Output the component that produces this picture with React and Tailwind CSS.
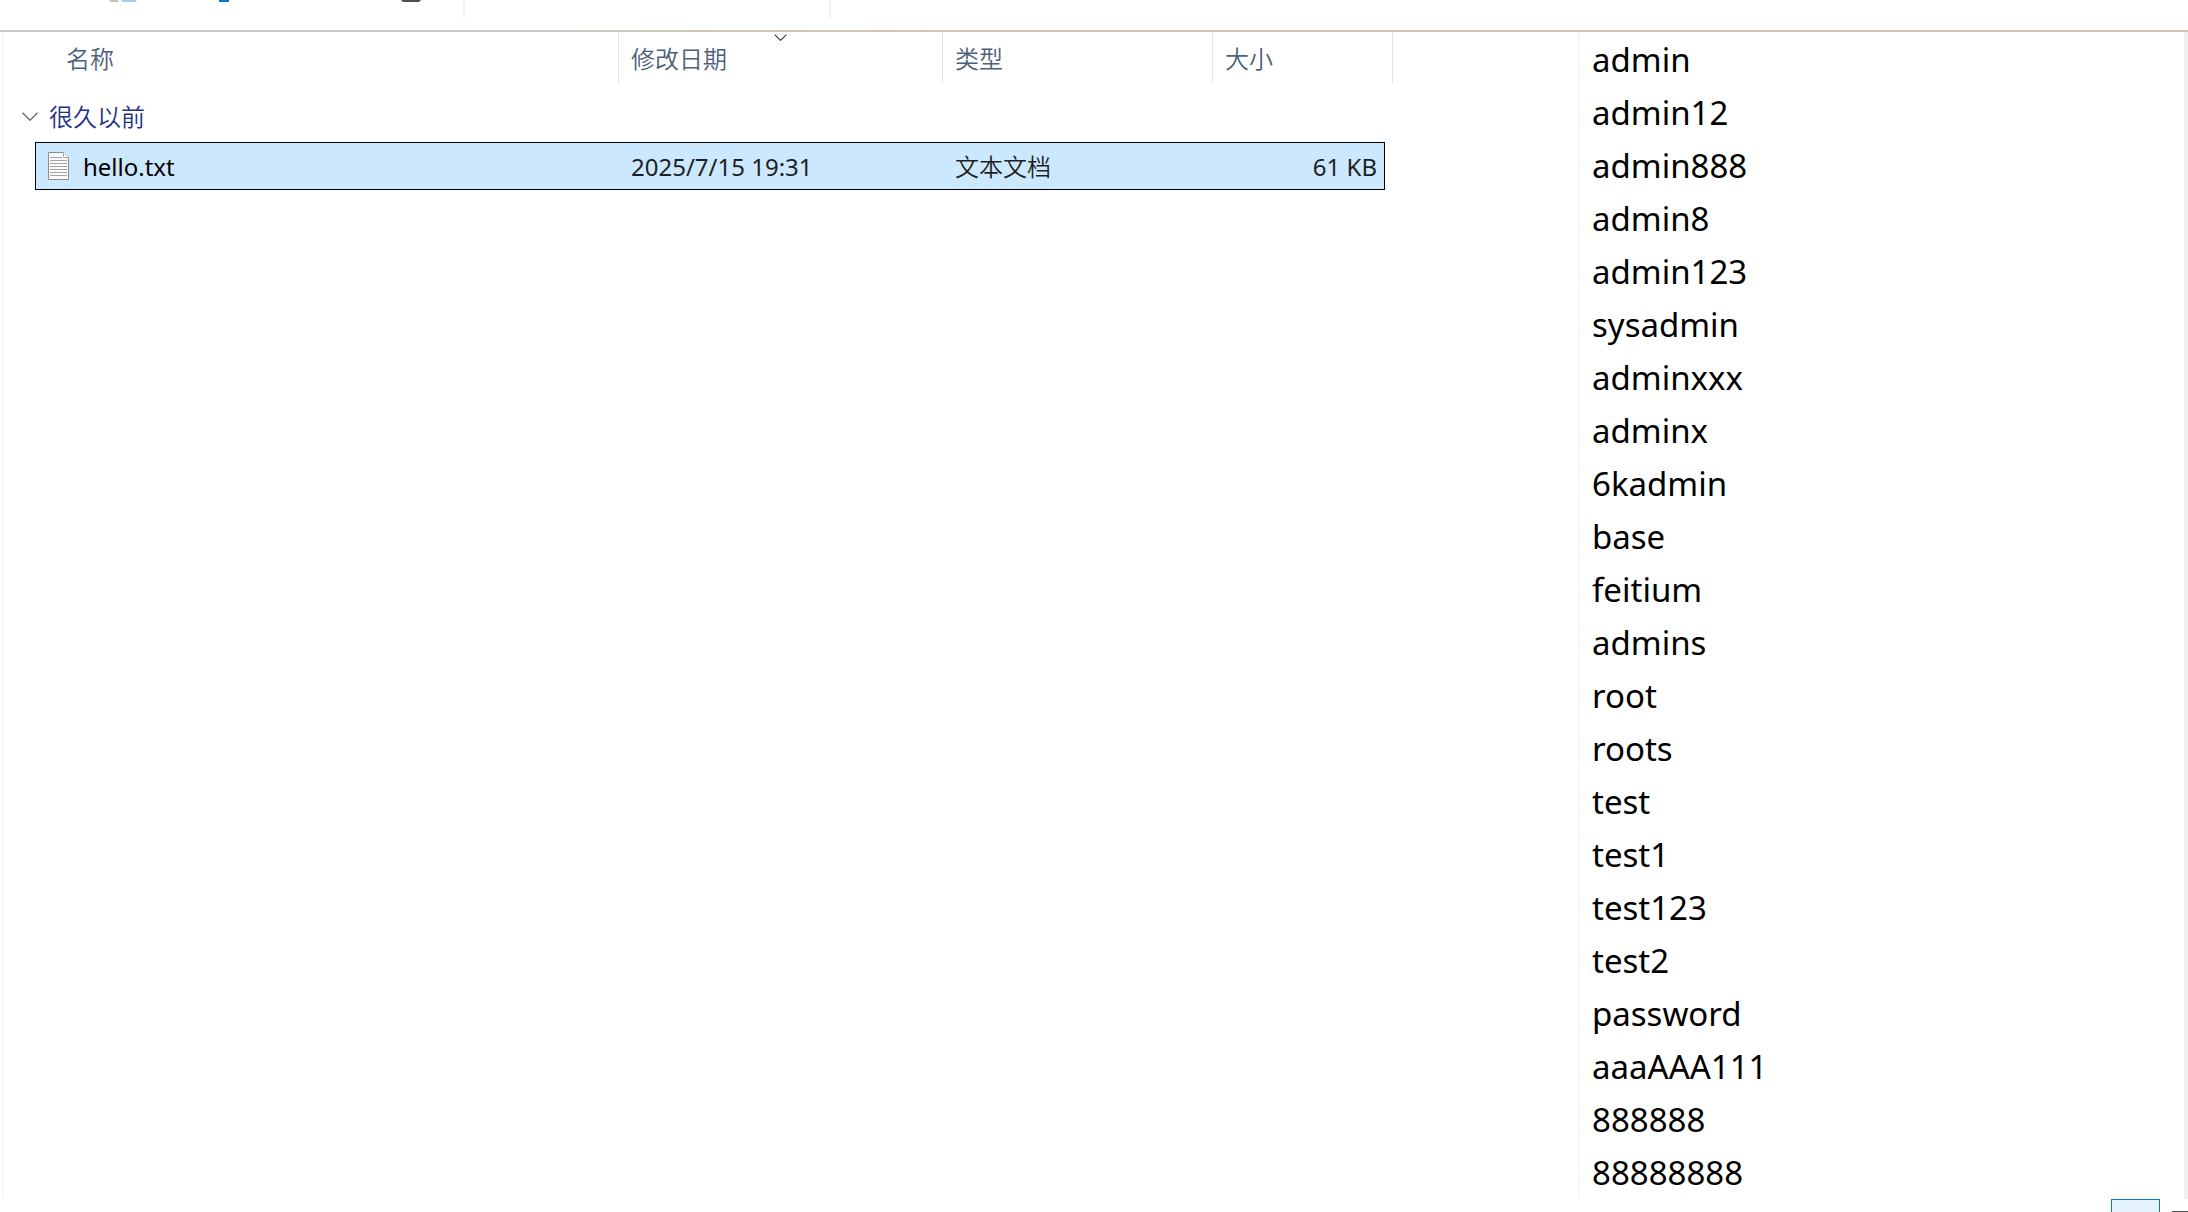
import { useState } from 'react';

const COLUMNS = [
    { id: 'date', label: '修改日期', sorted: true },
    { id: 'type', label: '类型' },
];

const FILES = [
    { name: 'hello.txt', date: '2025/7/15 19:31', type: '文本文档', size: '61 KB' },
];

const PREVIEW_LINES = [
    'admin',
    'admin12',
    'admin888',
    'admin8',
    'admin123',
    'sysadmin',
    'adminxxx',
    'adminx',
    '6kadmin',
    'base',
    'feitium',
    'admins',
    'root',
    'roots',
    'test',
    'test1',
    'test123',
    'test2',
    'password',
    'aaaAAA111',
    '888888',
    '88888888',
];

const TextFileIcon = () => (
    <svg width="21" height="28" viewBox="0 0 21 28" aria-hidden="true">
        <path d="M0.5 0.5H15.5L20.5 5.5V27.5H0.5Z" fill="#fafafa" stroke="#8c8c8c" />
        <path d="M15.5 0.5V5.5H20.5" fill="#ffffff" stroke="#a6a6a6" />
        <path
            d="M2 5.5H14M2 8.5H19M2 11.5H19M2 14.5H19M2 17.5H19M2 20.5H19M2 23.5H19"
            stroke="#a3a3a3"
        />
    </svg>
);

const Chevron = ({ width, height, color }) => (
    <svg width={width} height={height} viewBox="0 0 16 9" fill="none" aria-hidden="true">
        <path d="M0.5 0.8L8 8.2L15.5 0.8" stroke={color} strokeWidth="1.4" />
    </svg>
);

// Only the bottom edge of the command bar is visible
const CommandBar = () => (
    <div className="flex h-[30px] shrink-0 items-start overflow-hidden">
        <button type="button" aria-label="粘贴" className="ml-[109px] w-7">
            <svg width="28" height="2" viewBox="0 0 28 2">
                <path d="M0 0H9V2H3Q1 2 0 0Z" fill="#c3c1c0" />
                <path d="M12 0H28Q27 2 25 2H15Q13 2 12 0Z" fill="#a3cdf0" />
            </svg>
        </button>
        <button type="button" aria-label="重命名" className="ml-[82px] w-[10px]">
            <svg width="10" height="2" viewBox="0 0 10 2">
                <path d="M0 0H10V2H0Z" fill="#0b77d2" />
            </svg>
        </button>
        <button type="button" aria-label="删除" className="ml-[172px] w-5">
            <svg width="20" height="2" viewBox="0 0 20 2">
                <path d="M0 0H20Q19 2 17 2H3Q1 2 0 0Z" fill="#4f4f4f" />
            </svg>
        </button>
        <div className="ml-[42px] h-[18px] w-[2px] bg-[#f0f0f0]" />
        <div className="ml-[364px] h-[18px] w-[2px] bg-[#f0f0f0]" />
    </div>
);

const FileTable = () => {
    const [open, setOpen] = useState(true);

    return (
        <table className="w-[1389px] table-fixed border-separate border-spacing-0 text-left text-2xl">
            <colgroup>
                <col className="w-[31px]" />
                <col className="w-[584px]" />
                <col className="w-[324px]" />
                <col className="w-[270px]" />
                <col className="w-[172px]" />
                <col className="w-2" />
            </colgroup>
            <thead className="text-[#4c607a]">
                <tr>
                    <th colSpan={2} className="h-[51px] border-r border-[#e5e5e5] p-0 pt-[2px] pl-[62px] font-[350]">
                        名称
                    </th>
                    {COLUMNS.map((col) => (
                        <th key={col.id} className="relative border-r border-[#e5e5e5] p-0 pt-[2px] pl-3 font-[350]">
                            {col.label}
                            {col.sorted && (
                                <span className="absolute inset-x-0 top-[2px] flex justify-center">
                                    <Chevron width={13} height={7} color="#333333" />
                                </span>
                            )}
                        </th>
                    ))}
                    <th colSpan={2} className="border-r border-[#e5e5e5] p-0 pt-[2px] pl-3 font-[350]">
                        大小
                    </th>
                </tr>
            </thead>
            <tbody>
                <tr>
                    <td colSpan={6} className="h-[59px] p-0 pt-2 pl-[18px]">
                        <button
                            type="button"
                            aria-expanded={open}
                            onClick={() => setOpen(!open)}
                            className="flex items-center gap-[11px] font-[350] text-[#1e3287]"
                        >
                            <Chevron width={16} height={9} color="#6b6b6b" />
                            很久以前
                        </button>
                    </td>
                </tr>
                {open && FILES.map((file) => (
                    <tr key={file.name} className="text-[#1f1f1f]">
                        <td className="p-0" />
                        <td className="h-12 border-y border-l border-black bg-[#cce8ff] p-0 pl-3 text-black">
                            <div className="flex items-center gap-[14px]">
                                <TextFileIcon />
                                <span className="pt-[2px]">{file.name}</span>
                            </div>
                        </td>
                        <td className="border-y border-black bg-[#cce8ff] p-0 pt-[2px] pl-3">{file.date}</td>
                        <td className="border-y border-black bg-[#cce8ff] p-0 pt-[2px] pl-3 font-[350]">{file.type}</td>
                        <td className="border-y border-r border-black bg-[#cce8ff] p-0 pt-[2px] pr-[7px] text-right">
                            {file.size}
                        </td>
                        <td className="p-0" />
                    </tr>
                ))}
            </tbody>
        </table>
    );
};

const App = () => (
    <div className="flex h-screen flex-col overflow-hidden bg-white font-['Noto_Sans','Noto_Sans_CJK_SC',sans-serif]">
        <CommandBar />
        <div className="h-[2px] shrink-0 bg-linear-to-r from-[#c6cac7] from-20% to-[#d8c4b5] to-45%" />

        <div className="flex min-h-0 flex-1">
            <main className="min-w-0 flex-1 overflow-hidden pl-[2px]">
                <div className="h-full border-l-2 border-[#f7f7f7]">
                    <FileTable />
                </div>
            </main>
            <aside
                aria-label="预览"
                className="flex w-[610px] shrink-0 overflow-hidden border-r-4 border-l-2 border-r-[#f0f0f0] border-l-[#f7f7f7]"
            >
                <pre className="pt-px pl-3 font-['Noto_Sans','Noto_Sans_CJK_SC',sans-serif] text-[33px] leading-[53px] text-black">
                    {PREVIEW_LINES.join('\n')}
                </pre>
            </aside>
        </div>

        <footer className="flex h-[13px] shrink-0 items-start justify-end gap-3 overflow-hidden">
            <button
                type="button"
                aria-label="详细信息"
                className="h-11 w-[49px] shrink-0 border border-[#0a78cc] bg-[#e3f2fb]"
            />
            <button type="button" aria-label="大图标" className="mt-3 h-5 w-4 shrink-0 border-t border-[#4f4f4f]" />
        </footer>
    </div>
);

export default App;
